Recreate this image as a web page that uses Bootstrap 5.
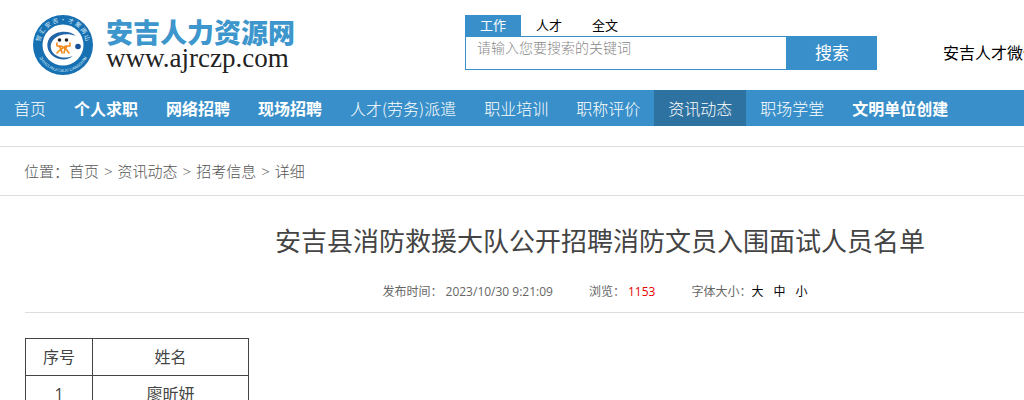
<!DOCTYPE html>
<html lang="zh-CN">
<head>
<meta charset="utf-8">
<meta name="viewport" content="width=device-width, initial-scale=1">
<title>安吉人力资源网</title>
<link href="https://cdn.jsdelivr.net/npm/bootstrap@5.3.0/dist/css/bootstrap.min.css" rel="stylesheet">
<style>
:root { --brand: #398fc9; --brand-dark: #2d72a0; --rule: #ddd; }
body { font-family: "Open Sans", "Noto Sans CJK SC", sans-serif; color: #000; font-size: 16px; overflow-x: hidden; }
a { color: inherit; text-decoration: none; }
.page { min-width: 1200px; }
.site-head { height: 90px; }
.brand-area { flex: 0 0 465px; padding-left: 32px; }
.brand-name { font-size: 27px; line-height: 26px; font-weight: 900; color: #3d96cc; }
.brand-url { font-family: "Liberation Serif", serif; font-size: 27px; line-height: 24px; color: #222; }
.search-area { flex: 0 0 412px; padding-top: 15px; }
.search-tabs .nav-link { padding: 0 15px; font-size: 13px; line-height: 21px; color: #000; border-radius: 0; }
.search-tabs .nav-link.active { background: var(--brand); color: #fff; }
.search-area .form-control { border: 1px solid var(--brand); height: 34px; padding: 0 11px 12px; font-size: 14px; line-height: 20px; font-weight: 300; }
.search-area .form-control::placeholder { color: #888; }
.search-area .btn { width: 90px; background: var(--brand); color: #fff; font-size: 17px; padding: 0; }
.wechat { padding: 15px 0 0 66px; }
.main-nav { background: var(--brand); font-family: "Noto Sans CJK SC", sans-serif; }
.main-nav .nav-link { padding: 0 14px; line-height: 36px; color: #fff; font-weight: 300; }
.main-nav .nav-link.fw-bold { font-weight: 700; }
.main-nav .nav-link.active { background: var(--brand-dark); }
.crumbs { border: solid var(--rule); border-width: 1px 0; margin-top: 20px; padding: 0 24px; color: #555; }
.crumbs .breadcrumb { font-size: 15px; line-height: 48px; font-weight: 300; }
.crumbs .breadcrumb-item + .breadcrumb-item { padding-left: 5px; }
.crumbs .breadcrumb-item + .breadcrumb-item::before { content: ">"; padding-right: 5px; color: #555; }
.crumbs .breadcrumb-item.active { color: inherit; }
.article { margin: 0 25px; color: #444; }
.article h1 { font-size: 26px; line-height: 40px; font-weight: 400; padding-top: 25px; }
.meta { font-size: 12px; line-height: 20px; gap: 36px; padding: 21px 0 10px; border-bottom: 1px solid var(--rule); color: #666; }
.meta-item { display: flex; gap: 3px; }
.views { color: #e60000; }
.size-btn { border: 0; background: none; padding: 0; margin-right: 10px; color: #000; }
.roster { width: 224px; margin-top: 25px; border-collapse: collapse; text-align: center; color: #444; }
.roster th, .roster td { border: 1px solid #444; height: 37px; padding: 0; font-weight: 400; line-height: 24px; }
.roster th:first-child { width: 67px; }
</style>
</head>
<body>
<div class="page">
<header class="site-head d-flex">
  <a href="#" class="brand-area d-flex align-items-center">
    <svg width="62" height="62" viewBox="0 0 62 62" aria-hidden="true">
      <defs>
        <path id="arcTop" d="M8 31a23 23 0 0 1 46 0"/>
        <path id="arcBottom" d="M4 31a27 27 0 0 0 54 0"/>
      </defs>
      <circle cx="31" cy="31" r="30" fill="#1670b2"/>
      <circle cx="31" cy="31" r="20.500" fill="#fff"/>
      <g fill="#d6ebf8" font-family="Noto Sans CJK SC, sans-serif" text-anchor="middle">
        <text font-size="6"><textPath href="#arcTop" startOffset="50%">智 汇 安 吉 · 才 聚 两 山</textPath></text>
        <text font-size="4"><textPath href="#arcBottom" startOffset="50%">ZHIHUI ANJI CAIJU LIANGSHAN</textPath></text>
      </g>
      <path d="M44 22C38 16 24 16 17.500 24c-5 8-1 17 8 20.500 6 2 12 1 15-2.500-5 2-11 2-15 0-7-3-9-11-4-16.500 5-5.500 15-6.500 22.500-3.500z" fill="#1f65a8"/>
      <circle cx="46" cy="32.500" r="2.800" fill="#174f99"/>
      <circle cx="27.500" cy="26" r="1.800" fill="#222"/><circle cx="34.500" cy="26" r="1.800" fill="#222"/>
      <path d="M25 29l0 3 4 0 5 3 3 4M38 29l0 3-4 0-5 3-4 4M27 32l2 3 1 4M35 32l-2 3-1 4" fill="none" stroke="#f28b1c" stroke-width="1.600" stroke-linecap="round" stroke-linejoin="round"/>
    </svg>
    <span class="d-flex flex-column ms-2 ps-1">
      <span class="brand-name">安吉人力资源网</span>
      <span class="brand-url">www.ajrczp.com</span>
    </span>
  </a>
  <form class="search-area">
    <div class="nav nav-pills search-tabs">
      <a class="nav-link active" href="#">工作</a>
      <a class="nav-link" href="#">人才</a>
      <a class="nav-link" href="#">全文</a>
    </div>
    <div class="d-flex">
      <input type="text" class="form-control rounded-0" placeholder="请输入您要搜索的关键词" aria-label="请输入您要搜索的关键词">
      <button type="button" class="btn border-0 rounded-0 flex-shrink-0">搜索</button>
    </div>
  </form>
  <a href="#" class="wechat text-nowrap align-self-center">安吉人才微信</a>
</header>
<nav class="main-nav nav">
  <a class="nav-link" href="#">首页</a>
  <a class="nav-link fw-bold" href="#">个人求职</a>
  <a class="nav-link fw-bold" href="#">网络招聘</a>
  <a class="nav-link fw-bold" href="#">现场招聘</a>
  <a class="nav-link" href="#">人才(劳务)派遣</a>
  <a class="nav-link" href="#">职业培训</a>
  <a class="nav-link" href="#">职称评价</a>
  <a class="nav-link active" href="#" aria-current="page">资讯动态</a>
  <a class="nav-link" href="#">职场学堂</a>
  <a class="nav-link fw-bold" href="#">文明单位创建</a>
</nav>
<nav class="crumbs" aria-label="breadcrumb">
  <ol class="breadcrumb mb-0">
    <li>位置：</li>
    <li class="breadcrumb-item ps-0"><a href="#">首页</a></li>
    <li class="breadcrumb-item"><a href="#">资讯动态</a></li>
    <li class="breadcrumb-item"><a href="#">招考信息</a></li>
    <li class="breadcrumb-item active" aria-current="page">详细</li>
  </ol>
</nav>
<main class="article">
  <h1 class="text-center mb-0">安吉县消防救援大队公开招聘消防文员入围面试人员名单</h1>
  <div class="meta d-flex justify-content-center">
    <span class="meta-item"><span>发布时间：</span><span>2023/10/30 9:21:09</span></span>
    <span class="meta-item"><span>浏览：</span><span class="views">1153</span></span>
    <span class="d-flex">字体大小：<button type="button" class="size-btn">大</button><button type="button" class="size-btn">中</button><button type="button" class="size-btn">小</button></span>
  </div>
  <table class="roster">
    <thead><tr><th scope="col">序号</th><th scope="col">姓名</th></tr></thead>
    <tbody><tr><td>1</td><td>廖昕妍</td></tr></tbody>
  </table>
</main>
</div>
<script src="https://cdn.jsdelivr.net/npm/bootstrap@5.3.0/dist/js/bootstrap.bundle.min.js"></script>
</body>
</html>
